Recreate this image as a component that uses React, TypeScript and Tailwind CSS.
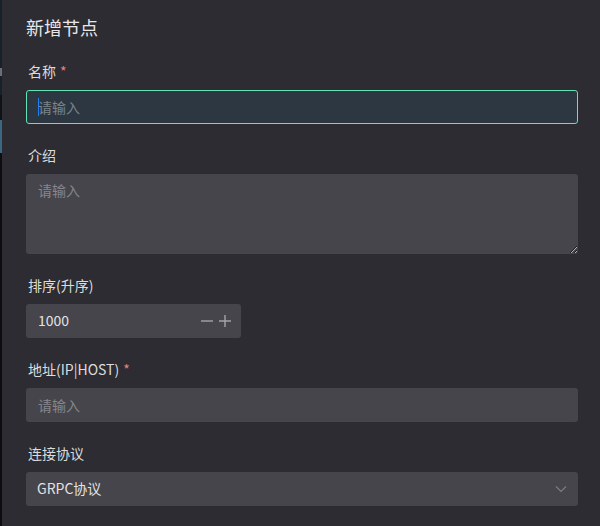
import type { ReactNode } from 'react'

const font = { fontFamily: '"Noto Sans CJK SC", "Microsoft YaHei", "Noto Sans", sans-serif' }

function Label({ children, required }: { children: ReactNode; required?: boolean }) {
  return (
    <div className="pl-[2px] pb-[9px] text-[14px] leading-[19px] text-[#dcdcde]">
      {children}
      {required && <span className="ml-[4px] text-[#e88080]">*</span>}
    </div>
  )
}

export default function App() {
  return (
    <div className="flex h-[526px] w-[600px] overflow-hidden bg-[#101014]" style={font}>
      {/* backdrop sliver left of the drawer */}
      <div className="flex w-[2px] flex-col">
        <div className="h-[68px] bg-[#16212c]" />
        <div className="h-[8px] bg-[#6b6f75]" />
        <div className="h-[19px] bg-[#16212c]" />
        <div className="h-[25px] bg-[#0f1216]" />
        <div className="h-[33px] bg-[#3b6782]" />
        <div className="flex-1 bg-[#0e0e11]" />
      </div>

      {/* drawer */}
      <div className="flex-1 bg-[#2c2c32] pl-[24px] pr-[22px]">
        <div className="flex h-[57px] items-center pb-[3px] text-[18px] text-[#e8e8ea]">
          新增节点
        </div>

        <div className="pt-[5px]">
          <Label required>名称</Label>
          <div className="relative">
            <input
              placeholder="请输入"
              className="h-[34px] w-full rounded-[3px] border border-[#63e2b7] bg-[#2c3742] px-[11px] pb-[1px] text-[14px] text-[#dcdcde] outline-none placeholder:text-[#7d838a]"
            />
            <span className="absolute left-[12px] top-[8px] h-[18px] w-[1px] bg-[#2080f0]" />
          </div>
        </div>

        <div className="pt-[22px]">
          <Label>介绍</Label>
          <textarea
            placeholder="请输入"
            className="block h-[80px] w-full rounded-[3px] bg-[#45454b] px-[12px] py-[6px] text-[14px] leading-[20px] text-[#dcdcde] outline-none placeholder:text-[#86868b]"
          />
        </div>

        <div className="pt-[22px]">
          <Label>排序(升序)</Label>
          <div className="flex h-[34px] w-[215px] items-center rounded-[3px] bg-[#45454b] pb-[1px] pl-[12px] pr-[10px]">
            <span className="flex-1 text-[14px] text-[#e2e2e4]">1000</span>
            <div className="flex items-center gap-[6px] text-[#a4a4a8]">
              <svg width="12" height="12" viewBox="0 0 12 12" aria-hidden="true">
                <path d="M0 6h12" stroke="currentColor" strokeWidth="1.4" />
              </svg>
              <svg width="12" height="12" viewBox="0 0 12 12" aria-hidden="true">
                <path d="M0 6h12M6 0v12" stroke="currentColor" strokeWidth="1.4" />
              </svg>
            </div>
          </div>
        </div>

        <div className="pt-[22px]">
          <Label required>地址(IP|HOST)</Label>
          <input
            placeholder="请输入"
            className="h-[34px] w-full rounded-[3px] bg-[#45454b] px-[12px] pb-[1px] text-[14px] text-[#dcdcde] outline-none placeholder:text-[#86868b]"
          />
        </div>

        <div className="pt-[22px]">
          <Label>连接协议</Label>
          <div className="flex h-[34px] w-full items-center rounded-[3px] bg-[#45454b] pb-[1px] pl-[11px] pr-[11px]">
            <span className="flex-1 text-[14px] text-[#e2e2e4]">GRPC协议</span>
            <svg width="12" height="8" viewBox="0 0 12 8" className="text-[#7c7c82]" aria-hidden="true">
              <path d="M1 1.5l5 5 5-5" fill="none" stroke="currentColor" strokeWidth="1.2" />
            </svg>
          </div>
        </div>
      </div>
    </div>
  )
}
